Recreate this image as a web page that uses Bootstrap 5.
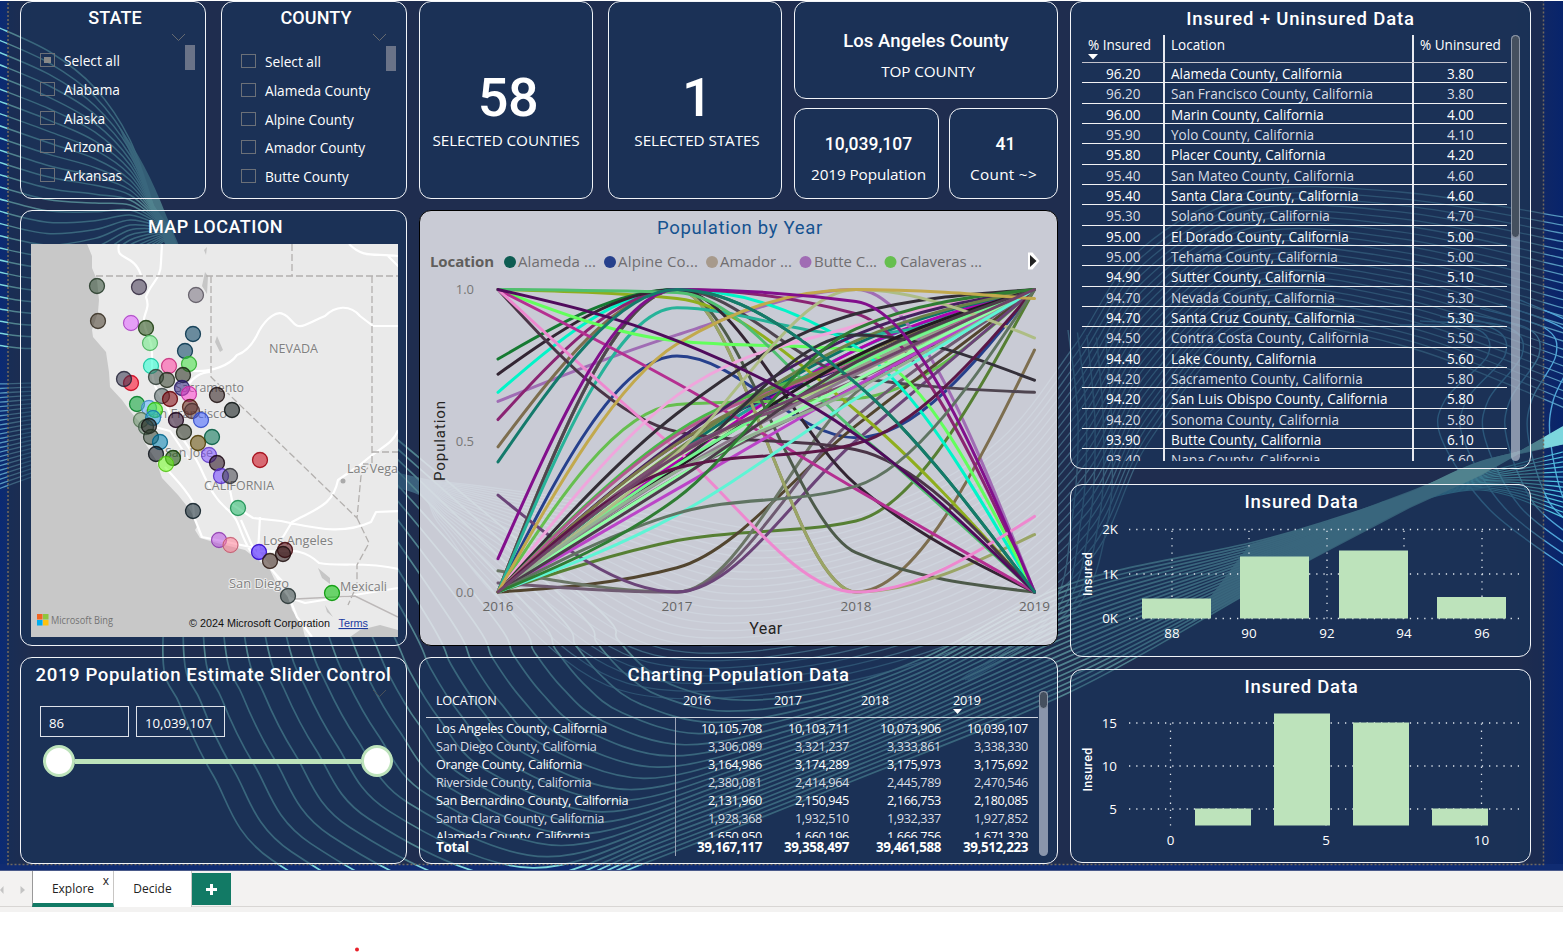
<!DOCTYPE html>
<html lang="en">
<head>
<meta charset="utf-8">
<title>Population and Insurance Report</title>
<link href="https://cdn.jsdelivr.net/npm/bootstrap@5.3.0/dist/css/bootstrap.min.css" rel="stylesheet">
<style>
:root{--ui:"Open Sans","Noto Sans",sans-serif;--din:Roboto,"Liberation Sans",sans-serif}
body{font-family:var(--ui);font-size:13px;color:#fff;background:#fff;overflow:hidden;height:952px}
.report{height:871px;padding:0 31px 7px 20px;background:#0e2a6b;border-top:1px solid #fff;border-bottom:1px solid #4a5a8a;overflow:hidden;gap:12px}
.backdrop{left:0;top:-1px;width:1563px;height:871px}
.panel{background:rgba(22,58,98,.38);border:1px solid #f2f4f8;border-radius:12px;overflow:hidden;min-width:0}
.col-left,.col-mid,.col-right{flex:none}
.col-left{width:387px;gap:11px}
.col-mid{width:639px;gap:11px}
.col-right{width:461px}
.h-top{height:198px;flex:none}.h-main{height:436px;flex:none}.h-low{height:207px;flex:none}
.ptitle{font-family:var(--din);font-weight:500;font-size:18.5px;line-height:22px;text-align:center;letter-spacing:.6px}
.ptitle.caps{letter-spacing:.1px;font-size:18px;padding-top:5px}
.slicer{width:186px}
.opts{padding:18px 0 0 19px}
.opt{height:28.7px;gap:9px;font-size:13.7px;line-height:20px}
.box{width:15px;height:14px;border:1px solid #6b7078;margin-top:-2px;flex:none}
.box.part{padding:3px}.box.part::before{content:"";display:block;width:7px;height:6px;background:#888}
.thumb{width:10px;height:25px;background:#6a7388;right:10px;top:43px}
.chev{right:19px;top:31px}
.kpi{width:174px}
.big{font-family:var(--din);font-weight:500;font-size:54px;line-height:56px;letter-spacing:-.5px;padding-top:68px}
.cap{font-size:15.3px;line-height:20px;letter-spacing:-.1px}
.kpi .cap{margin-top:4px}
.val{font-family:var(--din);font-weight:500;font-size:18.5px;line-height:22px}
.val.num{font-size:17.5px}
.light-panel{background:rgba(239,238,243,.82);border-color:#000;color:#605e5c}
.ins{width:425px;height:426px;overflow:hidden}
.irow{height:20.33px;border-bottom:1.3px solid #f2f2f4;line-height:22px;font-size:13.55px}
.irow>div+div{border-left:2px solid #e8eaf0}
.irow.head{height:28px;line-height:21px;border-bottom-color:#c3c3cc}
.irow:nth-child(odd):not(.head){color:#d9dde4}
.c1{width:81px;padding-left:24px}.c2{width:249px;padding-left:6px}.c3{width:95px;padding-left:33px}
.head .c1,.head .c3{padding-left:6px}
.irow,.opt,.prow{white-space:nowrap}
.track{width:9px;border-radius:5px;background:rgba(190,197,212,.68)}
.track i{display:block;border-radius:5px;background:#45505f;border:1px solid #8f98a8}
.prow{display:grid;grid-template-columns:249px 97px 87px 92px 87px;height:18px;line-height:18px;font-size:12.7px;letter-spacing:-.37px}
.prow>div{text-align:right;padding-right:10px}
.prow>div:first-child{text-align:left;padding-left:10px;letter-spacing:-.25px}
.prow.head{height:26px;line-height:19px}.prow.head>div{text-align:left;padding-left:2px}.prow.head>div:first-child{padding-left:10px}.prow.head>div:nth-child(2){padding-left:8px}
.prow:nth-child(even){color:#d9dde4}
.prow.total{font-size:13.4px;letter-spacing:-.4px}
.pbody{border-top:1px solid #cfd4de;background:linear-gradient(#9aa3b5,#9aa3b5) 249px 0/1px 100% no-repeat}
.pclip{height:120px;overflow:hidden;padding-top:1px}
.numbox{width:89px;height:31px;border:1px solid #dfe3ea;padding-left:8px;line-height:32px;font-size:13.2px}
.slide{height:32px;margin:8px 13px 0 22px}
.knob{width:32px;height:32px;border-radius:50%;background:#fff;border:3px solid #bde3bb;flex:none}
.rail{height:5px;background:#bde3bb}
.tabs{height:41px;background:#f3f2f1;color:#222;font-size:12px}
.tabs>div{height:36px;line-height:35px;text-align:center}
.tab-on{width:82px;background:#fff;border-left:1px solid #999;border-right:1px solid #c8c6c4;border-bottom:4px solid #127a65}
.tab-off{width:78px;background:#fff;border-right:1px solid #c8c6c4}
.tab-add{width:39px;background:#127a65;margin-top:2px}
.tab-line{left:0;right:0;top:35px;height:1px!important;background:#d8d6d4;z-index:-1}
.foot{background:#fff;height:40px}
svg text{font-family:var(--ui)}
.gl{stroke:#dfe5ec;stroke-width:1.3;stroke-dasharray:1.3 5.9;fill:none}
.axis{fill:#fff;font-size:13.4px;text-anchor:middle}
</style>
</head>
<body>
<div class="report d-flex position-relative">
  <svg class="backdrop position-absolute" viewBox="0 0 1563 871" id="bg"></svg>

  <div class="col-left d-flex flex-column position-relative">
    <div class="h-top d-flex justify-content-between">
      <div class="panel slicer position-relative">
        <div class="ptitle caps ps-1">STATE</div>
        <svg class="chev position-absolute" width="15" height="9"><path d="M1 1 7.5 7.5 14 1" fill="none" stroke="#666a70"/></svg>
        <div class="thumb position-absolute"></div>
        <div class="opts" id="states"></div>
      </div>
      <div class="panel slicer position-relative">
        <div class="ptitle caps ps-1">COUNTY</div>
        <svg class="chev position-absolute" width="15" height="9"><path d="M1 1 7.5 7.5 14 1" fill="none" stroke="#666a70"/></svg>
        <div class="thumb position-absolute" style="top:44px"></div>
        <div class="opts" id="counties" style="padding-top:19px"></div>
      </div>
    </div>
    <div class="panel h-main">
      <div class="ptitle caps ps-1" style="letter-spacing:.5px">MAP LOCATION</div>
      <svg width="367" height="393" viewBox="31 244 367 393" style="display:block;margin:6px 0 0 10px" id="map"></svg>
    </div>
    <div class="panel h-low position-relative">
      <div class="ptitle text-nowrap" style="padding-top:6px;font-size:18.6px">2019 Population Estimate Slider Control</div>
      <svg class="chev position-absolute" width="15" height="9"><path d="M1 1 7.5 7.5 14 1" fill="none" stroke="#4a5058"/></svg>
      <div class="d-flex" style="gap:7px;margin:20px 0 0 19px"><div class="numbox">86</div><div class="numbox">10,039,107</div></div>
      <div class="slide d-flex align-items-center"><div class="knob"></div><div class="rail flex-grow-1"></div><div class="knob"></div></div>
    </div>
  </div>

  <div class="col-mid d-flex flex-column position-relative">
    <div class="h-top d-flex">
      <div class="panel kpi text-center"><div class="big ps-1">58</div><div class="cap">SELECTED COUNTIES</div></div>
      <div class="panel kpi text-center" style="margin-left:15px"><div class="big ps-1">1</div><div class="cap ps-1">SELECTED STATES</div></div>
      <div class="d-flex flex-column justify-content-between" style="width:264px;margin-left:12px">
        <div class="panel text-center" style="height:98px;padding-top:28px"><div class="val" style="letter-spacing:.05px">Los Angeles County</div><div class="cap ps-1" style="margin-top:9px">TOP COUNTY</div></div>
        <div class="d-flex justify-content-between" style="height:91px">
          <div class="panel text-center" style="width:145px;padding-top:24px"><div class="val num ps-1">10,039,107</div><div class="cap ps-1" style="margin-top:9px">2019 Population</div></div>
          <div class="panel text-center" style="width:109px;padding-top:24px"><div class="val num ps-1">41</div><div class="cap" style="margin-top:9px;letter-spacing:.3px">Count ~&gt;</div></div>
        </div>
      </div>
    </div>
    <div class="panel light-panel h-main"><svg width="637" height="434" viewBox="420 211 637 434" id="lines" style="display:block"></svg></div>
    <div class="panel h-low">
      <div class="ptitle" style="padding-top:6px">Charting Population Data</div>
      <div class="d-flex" style="margin:5px 0 0 6px">
        <div id="pop" style="width:612px"></div>
        <div class="track" style="height:165px;margin-left:1px"><i style="height:18px"></i></div>
      </div>
    </div>
  </div>

  <div class="col-right d-flex flex-column position-relative">
    <div class="panel" style="height:468px">
      <div class="ptitle" style="padding-top:6px;letter-spacing:.85px">Insured + Uninsured Data</div>
      <div class="d-flex" style="margin:5px 0 0 11px">
        <div class="ins" id="ins"></div>
        <div class="track" style="height:426px;margin-left:4px"><i style="height:203px"></i></div>
      </div>
    </div>
    <div class="panel" style="height:173px;margin-top:15px"><svg width="459" height="171" viewBox="1071 484 459 171" id="h1" style="display:block"></svg></div>
    <div class="panel" style="height:194px;margin-top:12px"><svg width="459" height="192" viewBox="1071 669 459 192" id="h2" style="display:block"></svg></div>
  </div>
</div>

<div class="tabs d-flex position-relative" style="z-index:0">
  <div class="tab-line position-absolute"></div>
  <div style="width:32px"><svg width="32" height="36"><path d="M3.500 14v8L0 18zM20.500 14v8l4.500-4z" fill="#c4c4c4"/></svg></div>
  <div class="tab-on position-relative">Explore<span class="position-absolute" style="right:4px;top:-8px">x</span></div>
  <div class="tab-off">Decide</div>
  <div class="tab-add" style="height:32px"><svg width="39" height="32" style="display:block"><path d="M18 11h3v4h4v3h-4v4h-3v-4h-4v-3h4z" fill="#fff"/></svg></div>
</div>
<div class="foot"><svg width="400" height="40" style="display:block"><circle cx="357" cy="37.500" r="2" fill="#e8202a"/></svg></div>

<script src="https://cdn.jsdelivr.net/npm/bootstrap@5.3.0/dist/js/bootstrap.bundle.min.js"></script>
<script>
const $=id=>document.getElementById(id);
const opts=(id,a,p)=>$(id).innerHTML=a.map((t,i)=>`<div class="opt d-flex align-items-center"><span class="box ${p&&!i?'part':''}"></span>${t}</div>`).join('');
opts('states',['Select all','Alabama','Alaska','Arizona','Arkansas'],1);
opts('counties',['Select all','Alameda County','Alpine County','Amador County','Butte County'],0);

// Insurance table
const ins=[['96.20','Alameda','3.80'],['96.20','San Francisco','3.80'],['96.00','Marin','4.00'],['95.90','Yolo','4.10'],['95.80','Placer','4.20'],['95.40','San Mateo','4.60'],['95.40','Santa Clara','4.60'],['95.30','Solano','4.70'],['95.00','El Dorado','5.00'],['95.00','Tehama','5.00'],['94.90','Sutter','5.10'],['94.70','Nevada','5.30'],['94.70','Santa Cruz','5.30'],['94.50','Contra Costa','5.50'],['94.40','Lake','5.60'],['94.20','Sacramento','5.80'],['94.20','San Luis Obispo','5.80'],['94.20','Sonoma','5.80'],['93.90','Butte','6.10'],['93.40','Napa','6.60']];
$('ins').innerHTML='<div class="irow head d-flex"><div class="c1 position-relative">% Insured<svg class="position-absolute" style="left:6px;top:19px" width="10" height="6"><path d="M0 0h10L5 5.500z" fill="#fff"/></svg></div><div class="c2">Location</div><div class="c3">% Uninsured</div></div>'+
 ins.map(r=>`<div class="irow d-flex"><div class="c1">${r[0]}</div><div class="c2">${r[1]} County, California</div><div class="c3">${r[2]}</div></div>`).join('');

// Population table
const pop=[['Los Angeles','10,105,708','10,103,711','10,073,906','10,039,107'],['San Diego','3,306,089','3,321,237','3,333,861','3,338,330'],['Orange','3,164,986','3,174,289','3,175,973','3,175,692'],['Riverside','2,380,081','2,414,964','2,445,789','2,470,546'],['San Bernardino','2,131,960','2,150,945','2,166,753','2,180,085'],['Santa Clara','1,928,368','1,932,510','1,932,337','1,927,852'],['Alameda','1,650,950','1,660,196','1,666,756','1,671,329']];
const cells=r=>r.map(c=>`<div>${c}</div>`).join('');
$('pop').innerHTML='<div class="prow head">'+cells(['LOCATION','2016','2017','2018','2019<svg class="d-block" style="margin-top:-1px" width="9" height="5"><path d="M0 0h9L4.500 5z" fill="#fff"/></svg>'])+'</div>'+
 '<div class="pbody"><div class="pclip">'+pop.map(r=>'<div class="prow">'+cells([r[0]+' County, California',...r.slice(1)])+'</div>').join('')+
 '</div><div class="prow total fw-bold text-white">'+cells(['Total','39,167,117','39,358,497','39,461,588','39,512,223'])+'</div></div>';

// Histograms
function hist(el,title,ty,cy,ys,xs,top,bot,bars,xl,vx){
 let s=`<text x="1301.500" y="${ty}" text-anchor="middle" fill="#fff" style="font-family:var(--din);font-weight:500;font-size:18.5px;letter-spacing:.75px">${title}</text>`;
 s+=`<text transform="translate(1092 ${cy}) rotate(-90)" text-anchor="middle" fill="#fff" style="font-family:var(--din);font-weight:500;font-size:12.5px;letter-spacing:.3px">Insured</text>`;
 ys.forEach(([t,y])=>s+=`<text class="axis" style="text-anchor:end" x="${xl}" y="${y+4.500}">${t}</text><path class="gl" d="M1129 ${y}H1519"/>`);
 xs.forEach(([t,x])=>s+=`<text class="axis" x="${x}" y="${vx}">${t}</text><path class="gl" d="M${x} ${bot}V${top}"/>`);
 bars.forEach(([x,y,w])=>s+=`<rect x="${x}" y="${y}" width="${w}" height="${bot-y}" fill="#bde3bb"/>`);
 $(el).innerHTML=s;
}
hist('h1','Insured Data',506.5,573,[['2K',528.5],['1K',573],['0K',617.5]],[['88',1172],['90',1249],['92',1327],['94',1404],['96',1482]],529,617.5,[[1142,597.5,69],[1240,555.5,69],[1339,549.5,69],[1437,596,69]],1118,636.5);
hist('h2','Insured Data',692,768.5,[['15',722],['10',765],['5',808]],[['0',1170.500],['5',1326],['10',1481.500]],716.5,824.5,[[1195,807.5,56],[1274,712.5,56],[1353,721.5,56],[1432,807.5,56]],1117,843.5);

// Population lines: colour and share of range for 2016..2019
const S=[
['#8c7383',0,.46,.78,1],['#1fa39a',0,.45,.8,1],['#9aa08e',0,.44,.74,1],['#b5f0b0',0,.44,.7,1],['#6d5a68',0,.38,.68,1],['#c7e8b8',0,.47,.72,1],['#3b1a70',0,.49,.76,1],['#b000b0',0,.43,.8,1],['#0c7468',0,.46,.82,1],
['#26408c',0,.78,.51,1],['#a06cb4',.63,.85,1,0],['#66bf4f',0,.62,.64,1],['#567f33',0,.17,.235,1],['#52452f',0,.08,.55,1],['#6b7666',.07,0,.66,1],['#6f5b72',.03,0,.58,1],['#6b4478',.32,0,.5,1],
['#7d6e4f',.48,1,0,.8],['#4d5a4a',0,1,.13,0],['#9aa566',0,1,0,.19],['#4f4550',0,1,.71,.66],['#8fae1e',1,.97,.6,0],['#26b399',0,.94,.85,1],['#00f5c8',.66,1,.81,0],['#157a32',.77,1,.69,0],
['#8a2472',.57,1,.92,0],['#332533',.72,1,.355,0],['#63ff5c',1,.83,.8,0],['#b52f91',1,.69,.34,0],['#4a3547',1,.53,.47,0],['#ee88cf',1,.47,0,.25],['#4fbf6f',1,.99,.53,0],
['#f0a5dc',0,.65,.88,1],['#332d36',0,.59,.92,1],['#4ab84a',0,.53,.77,1],['#b4588f',0,.52,.76,1],['#46205f',0,.5,.85,1],['#7d7a4a',0,.49,.78,1],['#6b8248',0,.47,.83,1],['#34303a',0,.42,.85,.7],['#a8d080',0,.45,.72,1],['#201a20',0,.41,.78,1],['#73f58f',0,.42,.75,1],['#7d4f73',0,.46,.7,1],['#8c7a8c',0,.4,.72,1],['#aebd85',0,.46,1,.84],['#bb44c8',0,.34,.68,1],['#8fffa5',0,.38,.7,1],['#94b094',0,.4,.67,1],['#4c3b4a',0,.37,.76,1],['#5c1747',0,.41,.49,1],['#5ef5d5',0,.255,.64,1],['#607462',0,.26,.35,1],['#2f7d33',0,.31,.87,1],['#c2a94d',0,.82,1,.97],['#820f8c',.11,1,.96,0],['#500b5c',1,.83,.52,0],['#147a6b',.43,1,.69,0],['#6f4468',0,.45,.73,1]];
const X=[498,677,856,1034.5],Y=v=>592-302.5*v;
function curve(v){
 const y=v.map(Y),h=178.8,d=[0,1,2].map(i=>(y[i+1]-y[i])/h),m=[0,0,0,0];
 for(const i of[1,2])m[i]=d[i-1]*d[i]<=0?0:Math.sign(d[i])*Math.min(Math.abs(d[i-1]),Math.abs(d[i]),Math.abs(d[i-1]+d[i])/4)*2;
 m[0]=(3*d[0]-m[1])/2;m[3]=(3*d[2]-m[2])/2;
 let p=`M${X[0]} ${y[0]}`;
 for(let i=0;i<3;i++)p+=`C${X[i]+h/3} ${y[i]+m[i]*h/3} ${X[i+1]-h/3} ${y[i+1]-m[i+1]*h/3} ${X[i+1]} ${y[i+1]}`;
 return p;
}
let L='<text x="740" y="234" text-anchor="middle" fill="#155290" style="font-family:var(--din);font-size:18.5px;letter-spacing:.7px">Population by Year</text>';
L+='<text x="430" y="267" font-size="15" font-weight="700" fill="#605e5c" textLength="64">Location</text>';
[['#0d5c52',510,518,'Alameda ...',78],['#26408c',610,618,'Alpine Co...',80],['#a79a8c',712,720,'Amador ...',72],['#a06cb4',805.5,814,'Butte C...',63],['#66bf4f',890.5,900,'Calaveras ...',82]].forEach(a=>L+=`<circle cx="${a[1]}" cy="262" r="6" fill="${a[0]}"/><text x="${a[2]}" y="267" font-size="15" fill="#706e70" textLength="${a[4]}">${a[3]}</text>`);
L+='<path d="M1028 252.500h4.500l7 8.500-7 8.500h-4.500z" fill="#fff"/><path d="M1030 255v12l6.500-6z" fill="#222"/>';
[['1.0',294],['0.5',445.5],['0.0',596.5]].forEach(a=>L+=`<text x="474" y="${a[1]}" text-anchor="end" font-size="13" fill="#777">${a[0]}</text>`);
['2016','2017','2018','2019'].forEach((t,i)=>L+=`<text x="${X[i]}" y="611" text-anchor="middle" font-size="13.500" fill="#666" textLength="31">${t}</text>`);
L+='<text x="766" y="634" text-anchor="middle" fill="#252423" style="font-family:var(--din);font-size:16px;letter-spacing:.4px">Year</text><text transform="translate(445 440.500) rotate(-90)" text-anchor="middle" fill="#252423" style="font-family:var(--din);font-size:15px;letter-spacing:.9px">Population</text>';
S.forEach(s=>L+=`<path d="${curve(s.slice(1))}" fill="none" stroke="${s[0]}" stroke-width="3" stroke-linecap="round"/>`);
$('lines').innerHTML=L;

// Map
let M='<rect x="31" y="244" width="367" height="393" fill="#c8c8c8"/><path fill="#eaeaea" d="M87 244l5 12v12l5 12 2 20-1 12-6 18 1 7 13 15 3 20 1 15 12 13 8 11 12 14 1 15 13 20 6 18 16 17 12 15 8 15-3 5 5 8 17 5 28 7 13 10 12 10 7 15 11 12 4 13 10 15 3 12h93V244z"/>';
M+='<path d="M205 272l3 4-1 18-5-8zM217 336l6 14-3 2-5-10zM318 568l12 10v6l-8-6zM325 605l8 12-6-5zM350 637l10-7 20-5 18 5v7zM190 245l4 3M204 250l3-3-1 8z" fill="#c6c6c6"/>';
M+='<path d="M119 244c-4 18 14 8 22 31M162 244l-1 18c0 18-10 20-15 35 5 12-4 18-2 26 2 12 8 15 8 30v20c2 20 14 26 18 42s20 30 30 52 15 32 28 43 10 22 23 42M193 371c20 1 37-6 44-16 12-4 18-15 22-24 8-14 18-20 24-17 10 4 10 16 22 11s12-6 20-9c10-10 25-12 35 0l13 10h28M349 244c15 15 25 9 49 12M388 256l12 12M182 395c10-20 20-23 30-23M398 430c-5 15-20 18-38 35l-22 15c-5 25-20 28-46 42l-9 15-22 10M229 485l4 20 20 13 28 3 14 3c25 5 50 10 76-2l5-10 27-1M260 517l-2 35 18 23 13 22M257 551c30 2 42-6 62 12 22 4 45-2 80 6M241 520l14 32M290 598l15 5 93-15M165 467c10 12 18 18 28 35l1 15 8 20 25 5 33 7M289 597l8 20 15 20M255 552l28 30M155 427l15 4 20 30" fill="none" stroke="#fff" stroke-width="2.200" stroke-linejoin="round"/>';
M+='<path d="M96 276h302M292 244v32M211 276v101l146 141 4-42 10-12M372 276v188h-10M372 452h26M357 518l12 25-12 22v20l-9 20" fill="none" stroke="#b3b0ae" stroke-width="1.300" stroke-dasharray="7 3"/><path d="M295 599l60-3 43 21" fill="none" stroke="#bcb8b8" stroke-width="1.500"/>';
[['NEVADA',269,353,49],['Sacramento',175,392,69],['San Francisco',145,418,82],['San Jose',165,457,48],['CALIFORNIA',204,490,70],['Las Vega',347,473,51],['Los Angeles',263,545,70],['San Diego',229,588,60],['Mexicali',340,591,47]].forEach(a=>M+=`<text x="${a[1]}" y="${a[2]}" font-size="12" fill="#808080" stroke="#eee" stroke-width="2" paint-order="stroke" textLength="${a[3]}" lengthAdjust="spacingAndGlyphs">${a[0]}</text>`);
M+='<circle cx="343" cy="481" r="2.500" fill="#aaa"/>';
const P=[[97,286,'#2f4a33'],[139,287,'#403450'],[196,295,'#77707e'],[98,321,'#453a2a'],[131,323,'#e060ff'],[146,328,'#204a10'],[150,343,'#68e880'],[193,334,'#003c5c'],[185,351,'#003c5c'],[189,364,'#40e040'],[151,366,'#20ffd0'],[169,366,'#ff40a0'],[156,377,'#405048'],[167,380,'#303c28'],[183,375,'#202818'],[131,383,'#ff0020'],[124,379,'#303048'],[182,388,'#302080'],[189,394,'#ff40d0'],[217,395,'#281818'],[162,396,'#506060'],[170,399,'#800008'],[137,404,'#00a030'],[149,408,'#60b0ff'],[155,410,'#40f010'],[190,407,'#602010'],[192,411,'#604040'],[232,410,'#081010'],[141,420,'#709870'],[153,418,'#20a0e0'],[176,420,'#200020'],[201,420,'#4060ff'],[146,427,'#608068'],[149,426,'#181818'],[184,432,'#202818'],[212,437,'#007050'],[151,437,'#304030'],[160,442,'#0080b0'],[198,443,'#604800'],[209,455,'#8050ff'],[156,454,'#101820'],[173,458,'#104800'],[166,464,'#70ff20'],[217,463,'#200818'],[260,460,'#c80010'],[221,476,'#7040ff'],[230,476,'#404048'],[193,511,'#0c202c'],[238,508,'#20b868'],[219,540,'#b850e0'],[230.500,545,'#ff8098'],[259,552,'#3500ff'],[270,561,'#382018'],[285,550,'#500008'],[283,554,'#281414'],[288,596,'#304040'],[332,593,'#00c000']];
P.forEach(p=>M+=`<circle cx="${p[0]}" cy="${p[1]}" r="7.500" fill="${p[2]}" fill-opacity=".55" stroke="${p[2]}" stroke-opacity=".8" stroke-width="1.300"/><circle cx="${p[0]}" cy="${p[1]}" r="7.500" fill="none" stroke="#000" stroke-opacity=".25"/>`);
M+='<path d="M37 614h5.500v5.500H37z" fill="#f26522"/><path d="M43 614h5.500v5.500H43z" fill="#8dc63f"/><path d="M37 620h5.500v5.500H37z" fill="#00adef"/><path d="M43 620h5.500v5.500H43z" fill="#ffc20e"/><text x="51" y="624" font-size="10.500" fill="#737373" textLength="62" lengthAdjust="spacingAndGlyphs">Microsoft Bing</text>';
M+='<text x="189" y="627" fill="#111" textLength="141" lengthAdjust="spacingAndGlyphs" style="font:11px \'Liberation Sans\',sans-serif">© 2024 Microsoft Corporation</text><text x="338.500" y="627" fill="#1b3aa0" text-decoration="underline" textLength="29.500" lengthAdjust="spacingAndGlyphs" style="font:11px \'Liberation Sans\',sans-serif">Terms</text>';
$('map').innerHTML=M;

// Backdrop waves: each family blends from its first guide curve to its last
let W='';
const smooth=p=>{let d=`M${p[0]}`;for(let i=0;i<p.length-1;i++){const a=p[i-1]||p[i],b=p[i],c=p[i+1],e=p[i+2]||c;d+=`C${b[0]+(c[0]-a[0])/6} ${b[1]+(c[1]-a[1])/6} ${c[0]-(e[0]-b[0])/6} ${c[1]-(e[1]-b[1])/6} ${c}`}return d};
const line=(p,c,w)=>W+=`<path d="${smooth(p)}" fill="none" stroke="${c}" stroke-width="${w}"/>`;
const family=(n,g,c,w)=>{for(let i=0;i<n;i++){const t=i/(n-1);line(g.map(q=>[q[0]+(q[2]-q[0])*t,q[1]+(q[3]-q[1])*t]),c,w)}};
const teal='#7cd6de';
family(24,[[-5,384,-5,490],[90,386,90,462],[200,420,200,470],[400,474,400,488],[480,486,440,525],[640,508,500,600],[780,530,620,690],[900,500,800,690],[1000,440,980,640],[1075,345,1090,560],[1140,250,1150,440],[1250,192,1250,330],[1400,192,1400,345],[1570,218,1570,410]],'#5596bd',1.3);
family(7,[[1400,325,1520,300],[1474,328,1580,328],[1488,355,1590,355],[1445,400,1575,400],[1442,440,1572,440],[1490,510,1580,500],[1570,570,1600,520]],'#4fa5d8',1.4);
family(5,[[1068,330,1106,340],[1078,420,1112,430],[1072,520,1108,520],[1050,610,1075,610],[960,680,970,680]],'#4a88b0',1.4);
family(14,[[1380,503,1380,512],[1480,474,1480,490],[1570,450,1570,520]],'#4fc0dc',1.2);
family(27,[[-5,26,-5,345],[50,52,45,347],[95,88,95,318],[130,140,130,270],[153,205,165,240]],teal,1.5);
family(22,[[153,205,165,240],[180,260,186,262],[190,400,350,400],[163,640,588,600],[180,705,618,640],[213,775,645,668],[272,860,680,688],[450,935,740,700],[640,865,830,690],[850,782,930,655],[1070,692,1070,584],[1250,592,1250,543],[1330,548,1330,520],[1410,506,1410,493],[1480,474,1480,462],[1570,423,1570,442]],teal,1.7);
W+=`<path d="M1190 624L1330 550 1410 508 1480 476 1570 425V443L1480 463 1410 491 1330 521 1250 544z" fill="${teal}" fill-opacity=".85"/>`;
W+=`<path d="M118 125Q145 160 166 215L186 262H176L152 205z" fill="${teal}" fill-opacity=".85"/>`;
$('bg').innerHTML='<defs><linearGradient id="edge"><stop stop-color="#0b2a73"/><stop offset=".006" stop-color="#0e2c6c"/><stop offset=".02" stop-color="#1a2c60"/><stop offset=".97" stop-color="#1a2c60"/><stop offset="1" stop-color="#08246b"/></linearGradient></defs><rect width="1563" height="871" fill="url(#edge)"/><rect y="864" width="1563" height="7" fill="#102c72"/>'+W+'<rect x="8" y="-5" width="1535.500" height="869.500" fill="rgba(35,45,62,.5)" stroke="#71695f" stroke-width="1.500" stroke-dasharray="2 2"/>';
</script>
</body>
</html>
